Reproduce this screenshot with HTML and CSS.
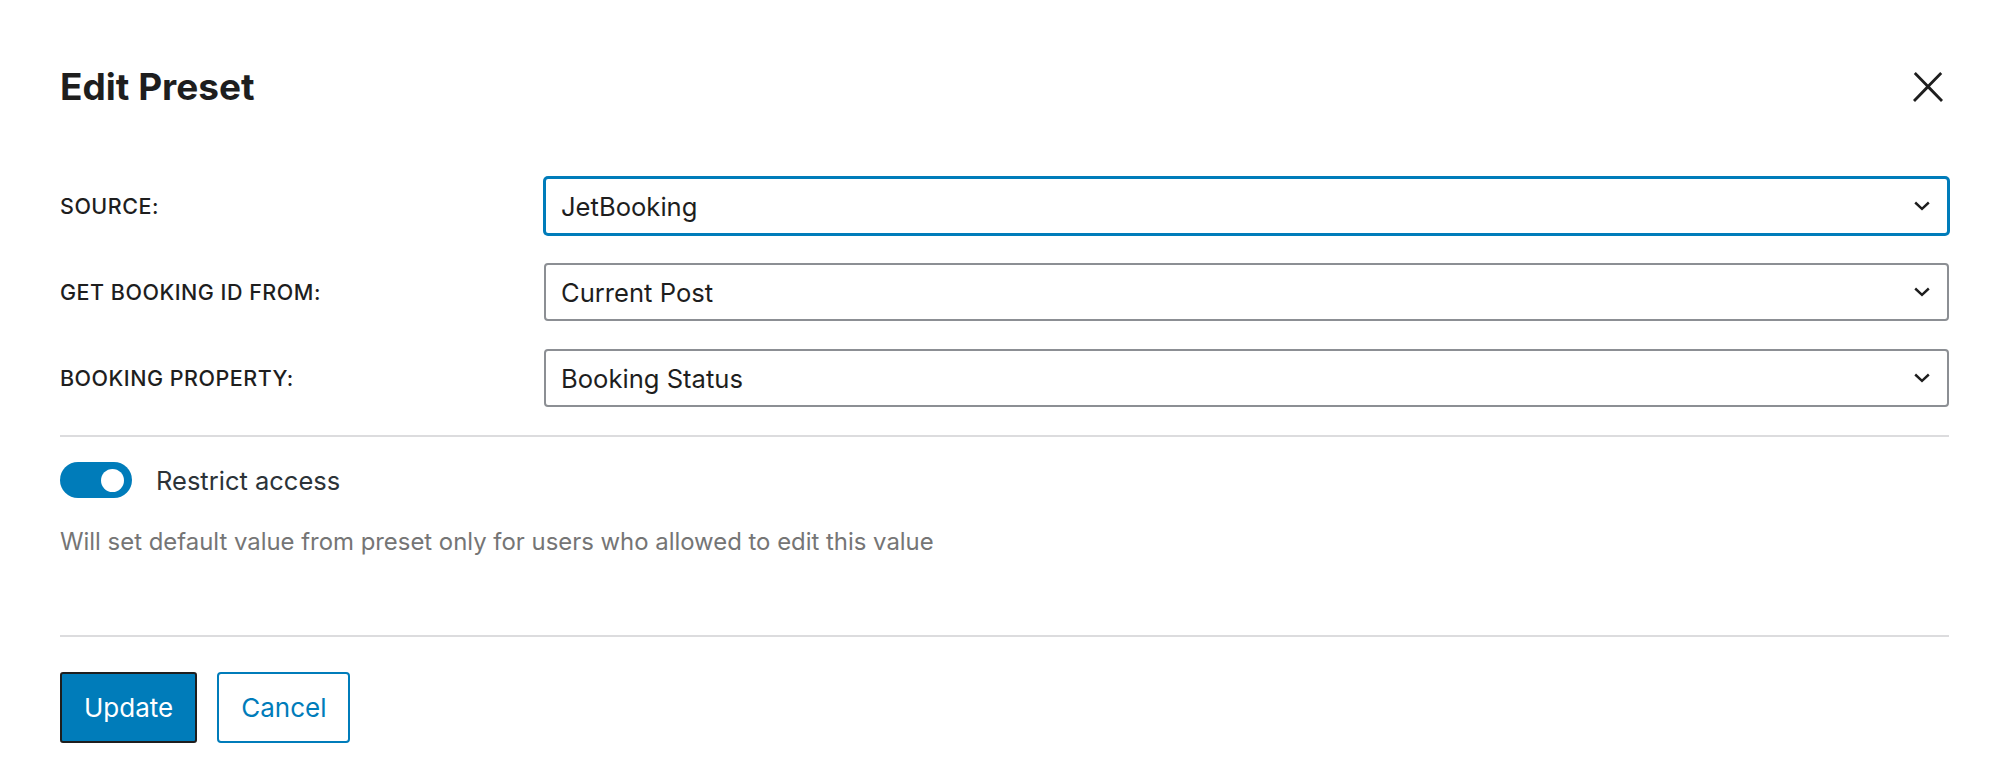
FILE: index.html
```html
<!DOCTYPE html>
<html lang="en">
<head>
<meta charset="utf-8">
<title>Edit Preset</title>
<link rel="stylesheet" href="styles.css">
</head>
<body>
<div class="modal">
  <header class="modal-header">
    <h1 class="modal-title">Edit Preset</h1>
    <button class="close-btn" type="button" aria-label="Close">
      <svg width="48" height="48" viewBox="0 0 24 24"><path d="M13 11.8l6.1-6.3-1-1-6.1 6.2-6.1-6.2-1 1 6.1 6.3-6.5 6.7 1 1 6.5-6.6 6.5 6.6 1-1z" fill="#1e1e1e"/></svg>
    </button>
  </header>

  <div class="fields">
    <div class="field">
      <div class="field-label">SOURCE:</div>
      <div class="select is-focused">
        <span class="select-value">JetBooking</span>
        <svg class="chevron" width="16" height="10" viewBox="0 0 16 10"><polyline points="1.2,1.5 8,7.8 14.8,1.5" fill="none" stroke="#1e1e1e" stroke-width="2.4"/></svg>
      </div>
    </div>
    <div class="field">
      <div class="field-label">GET BOOKING ID FROM:</div>
      <div class="select">
        <span class="select-value">Current Post</span>
        <svg class="chevron" width="16" height="10" viewBox="0 0 16 10"><polyline points="1.2,1.5 8,7.8 14.8,1.5" fill="none" stroke="#1e1e1e" stroke-width="2.4"/></svg>
      </div>
    </div>
    <div class="field">
      <div class="field-label">BOOKING PROPERTY:</div>
      <div class="select">
        <span class="select-value">Booking Status</span>
        <svg class="chevron" width="16" height="10" viewBox="0 0 16 10"><polyline points="1.2,1.5 8,7.8 14.8,1.5" fill="none" stroke="#1e1e1e" stroke-width="2.4"/></svg>
      </div>
    </div>
  </div>

  <div class="divider divider-top"></div>

  <div class="toggle-row">
    <span class="toggle is-checked"><span class="toggle-knob"></span></span>
    <span class="toggle-label">Restrict access</span>
  </div>
  <p class="help">Will set default value from preset only for users who allowed to edit this value</p>

  <div class="divider divider-bottom"></div>

  <div class="actions">
    <button class="btn btn-primary" type="button">Update</button>
    <button class="btn btn-secondary" type="button">Cancel</button>
  </div>
</div>
</body>
</html>
```
FILE: styles.css
```css
* { box-sizing: border-box; }

html, body {
  margin: 0;
  padding: 0;
  background: #ffffff;
}

body {
  font-family: Inter, "Noto Sans", sans-serif;
  color: #1e1e1e;
}

.modal {
  padding: 0 55px 0 60px;
}

.modal-header {
  display: flex;
  align-items: center;
  justify-content: space-between;
  height: 48px;
  margin-top: 63px;
}

.modal-title {
  margin: 0;
  font-size: 37px;
  font-weight: 700;
  line-height: 48px;
  color: #1e1e1e;
  letter-spacing: 0;
}

.close-btn {
  background: none;
  border: 0;
  padding: 0;
  margin-right: -3px;
  width: 48px;
  height: 48px;
  display: flex;
}

.fields {
  margin-top: 66px;
  display: flex;
  flex-direction: column;
  gap: 28px;
}

.field {
  display: grid;
  grid-template-columns: 484px 1fr;
  align-items: center;
}

.field-label {
  font-size: 21.5px;
  font-weight: 500;
  color: #1e1e1e;
  letter-spacing: 0.5px;
}

.select {
  height: 58px;
  border: 2px solid #8c8f94;
  border-radius: 4px;
  display: flex;
  align-items: center;
  justify-content: space-between;
  padding: 0 17px 0 15px;
  background: #fff;
}

.select.is-focused {
  border-color: #007cba;
  box-shadow: 0 0 0 1px #007cba;
}

.select-value {
  font-size: 25.6px;
  color: #1e1e1e;
}

.chevron { display: block; }

.divider {
  height: 2px;
  background: #dcdcde;
}

.divider-top { margin-top: 28px; }

.toggle-row {
  margin-top: 25px;
  display: flex;
  align-items: center;
  gap: 24px;
}

.toggle {
  width: 72px;
  height: 36px;
  border-radius: 18px;
  background: #007cba;
  display: flex;
  align-items: center;
  justify-content: flex-end;
  padding: 0 8px;
}

.toggle-knob {
  width: 23px;
  height: 23px;
  border-radius: 50%;
  background: #fff;
}

.toggle-label {
  font-size: 25.5px;
  color: #2c3338;
}

.help {
  margin: 28px 0 0;
  font-size: 23.9px;
  line-height: 32px;
  color: #757575;
}

.divider-bottom { margin-top: 77px; }

.actions {
  margin-top: 35px;
  display: flex;
  gap: 20px;
}

.btn {
  height: 71px;
  padding: 0 22px;
  font-family: inherit;
  font-size: 26px;
  border-radius: 4px;
  cursor: pointer;
}

.btn-primary {
  background: #007cba;
  color: #fff;
  border: 2px solid #1e1e1e;
  border-radius: 3px;
}

.btn-secondary {
  background: #fff;
  color: #007cba;
  border: 2px solid #007cba;
}
```
